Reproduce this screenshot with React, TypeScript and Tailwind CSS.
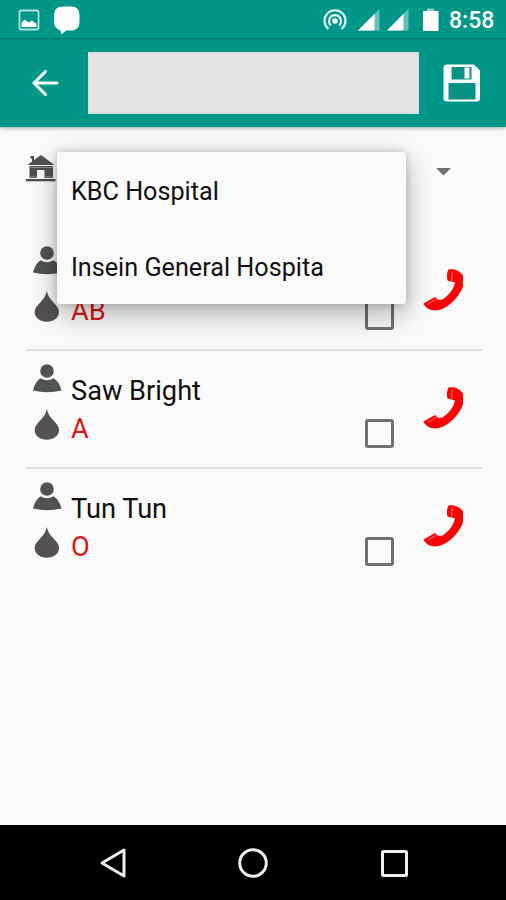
import React from 'react';

const donors = [
  { name: '', blood: 'AB' },
  { name: 'Saw Bright', blood: 'A' },
  { name: 'Tun Tun', blood: 'O' },
];

const hospitals = ['KBC Hospital', 'Insein General Hospita'];

const SignalIcon = () => (
  <svg width="24" height="24" viewBox="0 0 24 24">
    <path d="M22.500 1v21.500H1z" fill="#fff" fillOpacity="0.4" />
    <path d="M17.500 6V22.500H1z" fill="#fff" />
  </svg>
);

const PersonIcon = () => (
  <svg width="30" height="30" viewBox="0 0 30 30" fill="#505353">
    <circle cx="14" cy="7" r="6.800" />
    <path d="M7.500 14.300Q14 18.300 20.500 14.300C24.500 16.500 27 20.500 28.500 26.500Q14 29.800 0 26.500C1.500 20.500 4 16.500 7.500 14.300z" />
  </svg>
);

const DropIcon = () => (
  <svg width="26" height="32" viewBox="0 0 26 32">
    <path d="M12.800 0C13.800 5 16 7.500 19.500 11.500C23 15 25 17.500 25 21C25 27 19.500 30.700 12.800 30.700S.7 27 .7 21C.7 17.500 2.700 15 6.200 11.500C9.700 7.500 11.800 5 12.800 0z" fill="#555150" />
  </svg>
);

const PhoneIcon = () => (
  <svg width="42" height="42" viewBox="0 0 42 42">
    <path
      d="M25.500 0.500C31-.3 36.500 1.500 40 6.500V17.500C36 28 26 38.500 16 41C10 42.300 3 40.500 0.500 34.500L12 28L15.500 31L19.500 30.500C26 26 30.500 20.500 32 13.500L24.500 11.500C23.500 8 23.800 3.500 25.500 0.500z"
      fill="#fc0303"
    />
    <path d="M4.500 35.500L14 29.800M29.500 2Q28.300 6.500 29 12" fill="none" stroke="#ff7474" strokeWidth="1" />
  </svg>
);

const HomeIcon = () => (
  <svg width="30" height="27" viewBox="0 0 30 27" fill="#505050">
    <path d="M15 0L28.500 10H1.500L6 6.500V4L4.500 3V1H8V5z" />
    <path d="M3.500 11H27V23H18.500V15H11V23H3.500z" />
    <path d="M3.500 12.500H27M3.500 21.800H11M19 21.800H27" stroke="#8a8a8a" strokeWidth="1" />
    <path d="M0 24H29.500V26.300H0z" />
  </svg>
);

const StatusBar = () => (
  <div className="flex h-[38px] items-center bg-[#009688] pl-[18px] pr-2.5 shadow-[0_1px_2px_rgba(0,60,50,0.5)] relative">
    <svg className="mt-px" width="22" height="22" viewBox="0 0 22 22">
      <rect x="1.500" y="1.500" width="19" height="19" rx="1.500" fill="none" stroke="#b5dfda" strokeWidth="1.800" />
      <path d="M3.500 18V14L6.500 10.500L10.500 13.500L14 11.500L18.500 15V18z" fill="#fff" />
    </svg>
    <svg className="ml-[13px] mt-px" width="28" height="30" viewBox="0 0 28 30">
      <path d="M10 1.500H18Q26.500 1.500 26.500 10V17Q26.500 25.500 18 25.500H13L8.500 29.500L7.500 25.500Q1 23 1 17V10Q1 1.500 10 1.500z" fill="#fff" />
    </svg>
    <div className="flex-1" />
    <svg className="mt-0.5" width="24" height="24" viewBox="0 0 24 24" fill="none" stroke="#e5f5f3" strokeWidth="2.200">
      <path d="M5.500 21A10.500 10.500 0 1 1 18.500 21" />
      <path d="M8 17.500A6 6 0 1 1 16 17.500" />
      <circle cx="12" cy="13" r="2.800" fill="#fff" stroke="none" />
    </svg>
    <div className="ml-2.5 mt-px flex gap-[5px]">
      <SignalIcon />
      <SignalIcon />
    </div>
    <svg className="ml-[12px] mt-px" width="18" height="24" viewBox="0 0 18 24">
      <path d="M5 0.500H12V4H5z" fill="#8fcfc8" />
      <path d="M1 3H16.500V23H1z" fill="#fff" />
    </svg>
    <span className="ml-[9px] mt-[3px] w-[47px] whitespace-nowrap text-[23px] leading-6 font-medium text-white">8:58</span>
  </div>
);

const Toolbar = () => (
  <header className="flex h-[89px] items-center bg-[#009688] pl-8 pr-[25px] shadow-[0_1px_4px_rgba(0,0,0,0.35)]">
    <svg width="27" height="27" viewBox="0 0 27 27" fill="none" stroke="#fff" strokeWidth="3">
      <path d="M25 14H3M13.500 2.500L2 14L13.500 25.500" strokeLinecap="round" />
    </svg>
    <div className="ml-[29px] h-[62px] w-[331px] border border-[#cfe0dd] bg-[#e4e4e4]" />
    <div className="flex-1" />
    <svg width="38" height="38" viewBox="0 0 38 38">
      <path d="M4 0.500H31L37 6.500V34Q37 37.500 34 37.500H4Q.5 37.500 .5 34V4Q.5 .5 4 .5z" fill="#fff" />
      <path d="M8.500 3H28.500V15.500H8.500z" fill="#079284" />
      <path d="M21.500 3.500H26.500V14.500H21.500z" fill="#fff" />
      <path d="M5.500 19H32.500V35.500H5.500z" fill="#079284" />
    </svg>
  </header>
);

const DonorRow = ({ name, blood }: { name: string; blood: string }) => (
  <li className="flex h-[118px] pl-[7px] border-b-2 border-[#e2e2e2] last:border-transparent">
    <div className="w-[38px] shrink-0 pt-[13px]">
      <PersonIcon />
      <div className="ml-px mt-[15px]">
        <DropIcon />
      </div>
    </div>
    <div className="w-[294px] pt-[21px] text-[27.200px] leading-[38px]">
      <p className="h-[38px] text-[#111]">{name}</p>
      <p className="text-[#dd1414]">{blood}</p>
    </div>
    <div className="mt-[68px] size-[29px] rounded-[3px] border-[3px] border-[#707070]" />
    <div className="ml-[29px] mt-[36px]">
      <PhoneIcon />
    </div>
  </li>
);

const App = () => {
  return (
    <div className="flex h-[900px] w-[506px] flex-col overflow-hidden bg-[#fafafa] font-['Roboto',sans-serif]">
      <StatusBar />
      <Toolbar />

      <main className="relative flex-1 pl-[26px] pr-6">
        <div className="flex h-[106px] justify-between pt-7">
          <HomeIcon />
          <svg className="mr-[30px] mt-[13px]" width="16" height="8" viewBox="0 0 16 8">
            <path d="M0 0H15L7.500 7.500z" fill="#707070" />
          </svg>
        </div>

        <ul>
          {donors.map((donor) => (
            <DonorRow key={donor.blood} name={donor.name} blood={donor.blood} />
          ))}
        </ul>

        {/* Hospital dropdown */}
        <div className="absolute left-[57px] top-[25px] h-[152px] w-[349px] rounded-[3px] bg-[#fafafa] shadow-[0_10px_28px_rgba(0,0,0,0.3),0_0_8px_rgba(0,0,0,0.2)]">
          {hospitals.map((hospital) => (
            <div key={hospital} className="flex h-[76px] items-center pl-[14px] pt-[3px] text-[25.200px] text-[#111]">
              {hospital}
            </div>
          ))}
        </div>
      </main>

      {/* Navigation bar */}
      <nav className="flex h-[75px] items-center justify-between bg-black pl-[99px] pr-[97px]">
        <svg width="27" height="32" viewBox="0 0 27 32" fill="none" stroke="#eee" strokeWidth="3">
          <path d="M25 3V29L3 16z" strokeLinejoin="round" />
        </svg>
        <svg width="32" height="32" viewBox="0 0 32 32" fill="none" stroke="#eee" strokeWidth="3">
          <circle cx="16" cy="16" r="13.300" />
        </svg>
        <svg className="mt-px" width="29" height="29" viewBox="0 0 29 29" fill="none" stroke="#eee" strokeWidth="3">
          <rect x="2.500" y="2.500" width="24" height="24" rx="1" />
        </svg>
      </nav>
    </div>
  );
};

export default App;
